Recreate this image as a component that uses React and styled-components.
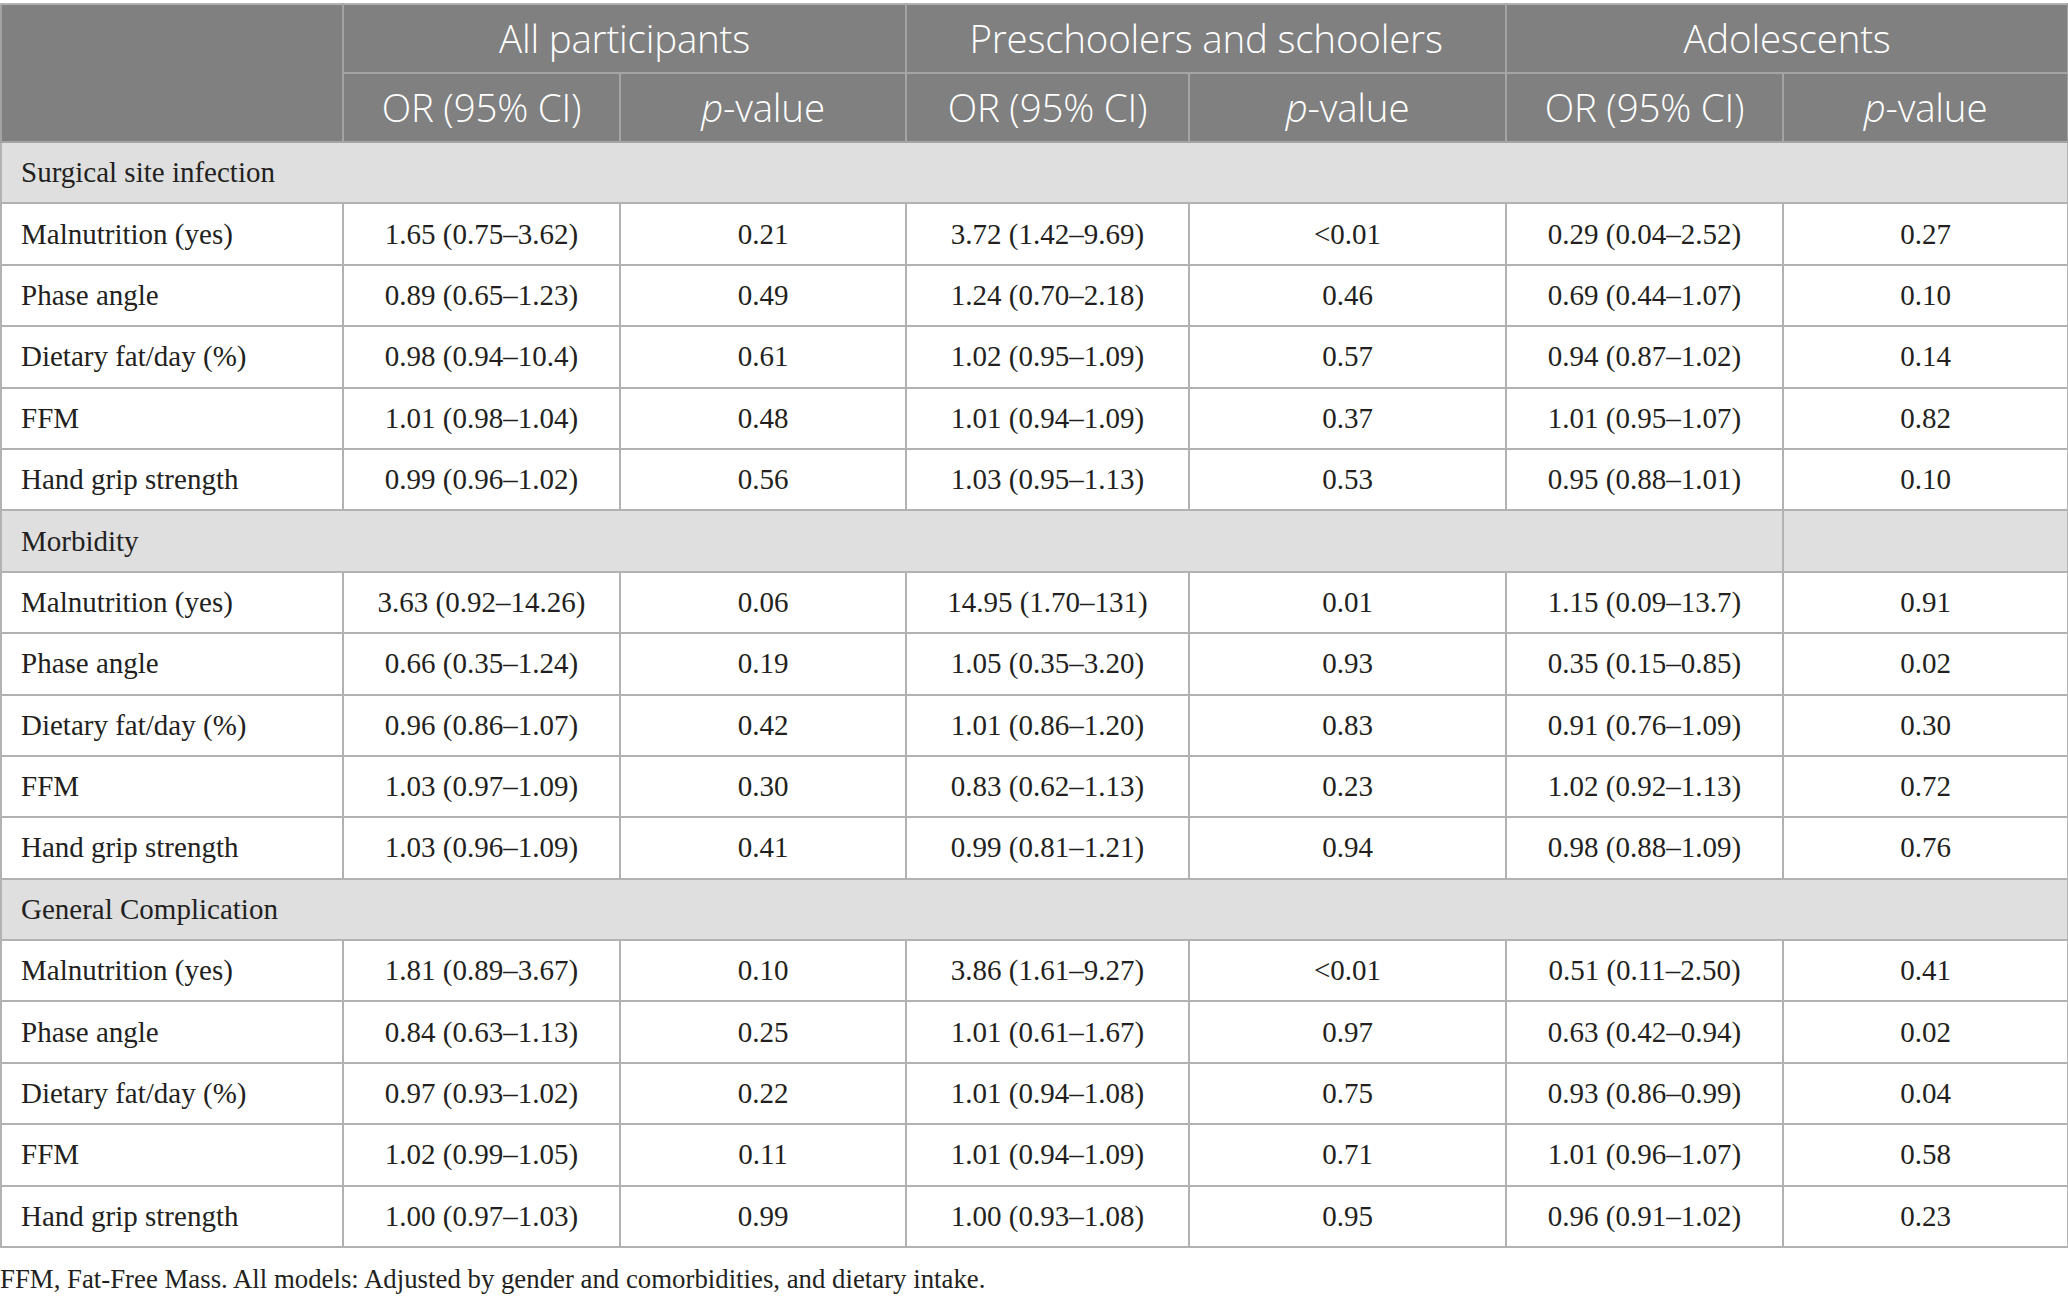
import React from 'react'
import styled, { createGlobalStyle } from 'styled-components'

const GlobalStyle = createGlobalStyle`
html, body {
    margin: 0;
    padding: 0;
    background: #ffffff;
}
`

const widths = [342, 277, 286, 283, 317, 277, 285]

const groups = ['All participants', 'Preschoolers and schoolers', 'Adolescents']

const sections = [
    {
        title: 'Surgical site infection',
        rows: [
            ['Malnutrition (yes)', '1.65 (0.75–3.62)', '0.21', '3.72 (1.42–9.69)', '<0.01', '0.29 (0.04–2.52)', '0.27'],
            ['Phase angle', '0.89 (0.65–1.23)', '0.49', '1.24 (0.70–2.18)', '0.46', '0.69 (0.44–1.07)', '0.10'],
            ['Dietary fat/day (%)', '0.98 (0.94–10.4)', '0.61', '1.02 (0.95–1.09)', '0.57', '0.94 (0.87–1.02)', '0.14'],
            ['FFM', '1.01 (0.98–1.04)', '0.48', '1.01 (0.94–1.09)', '0.37', '1.01 (0.95–1.07)', '0.82'],
            ['Hand grip strength', '0.99 (0.96–1.02)', '0.56', '1.03 (0.95–1.13)', '0.53', '0.95 (0.88–1.01)', '0.10'],
        ],
    },
    {
        title: 'Morbidity',
        split: true,
        rows: [
            ['Malnutrition (yes)', '3.63 (0.92–14.26)', '0.06', '14.95 (1.70–131)', '0.01', '1.15 (0.09–13.7)', '0.91'],
            ['Phase angle', '0.66 (0.35–1.24)', '0.19', '1.05 (0.35–3.20)', '0.93', '0.35 (0.15–0.85)', '0.02'],
            ['Dietary fat/day (%)', '0.96 (0.86–1.07)', '0.42', '1.01 (0.86–1.20)', '0.83', '0.91 (0.76–1.09)', '0.30'],
            ['FFM', '1.03 (0.97–1.09)', '0.30', '0.83 (0.62–1.13)', '0.23', '1.02 (0.92–1.13)', '0.72'],
            ['Hand grip strength', '1.03 (0.96–1.09)', '0.41', '0.99 (0.81–1.21)', '0.94', '0.98 (0.88–1.09)', '0.76'],
        ],
    },
    {
        title: 'General Complication',
        rows: [
            ['Malnutrition (yes)', '1.81 (0.89–3.67)', '0.10', '3.86 (1.61–9.27)', '<0.01', '0.51 (0.11–2.50)', '0.41'],
            ['Phase angle', '0.84 (0.63–1.13)', '0.25', '1.01 (0.61–1.67)', '0.97', '0.63 (0.42–0.94)', '0.02'],
            ['Dietary fat/day (%)', '0.97 (0.93–1.02)', '0.22', '1.01 (0.94–1.08)', '0.75', '0.93 (0.86–0.99)', '0.04'],
            ['FFM', '1.02 (0.99–1.05)', '0.11', '1.01 (0.94–1.09)', '0.71', '1.01 (0.96–1.07)', '0.58'],
            ['Hand grip strength', '1.00 (0.97–1.03)', '0.99', '1.00 (0.93–1.08)', '0.95', '0.96 (0.91–1.02)', '0.23'],
        ],
    },
]

function PValue() {
    return <><i>p</i>-value</>
}

export default function App() {
    return (
        <Page>
            <GlobalStyle />
            <Table>
                <colgroup>
                    {widths.map((w, i) => <col key={i} style={{ width: w }} />)}
                </colgroup>
                <thead>
                    <tr>
                        <HeadCell rowSpan={2} />
                        {groups.map(g => <HeadCell key={g} colSpan={2}>{g}</HeadCell>)}
                    </tr>
                    <tr>
                        {groups.map(g => (
                            <React.Fragment key={g}>
                                <HeadCell>OR (95% CI)</HeadCell>
                                <HeadCell><PValue /></HeadCell>
                            </React.Fragment>
                        ))}
                    </tr>
                </thead>
                <tbody>
                    {sections.map(s => (
                        <React.Fragment key={s.title}>
                            <tr>
                                <SectionCell colSpan={s.split ? 6 : 7}>{s.title}</SectionCell>
                                {s.split && <SectionCell />}
                            </tr>
                            {s.rows.map((r, i) => (
                                <tr key={i}>
                                    {r.map((c, j) => <Cell key={j} first={j === 0}>{c}</Cell>)}
                                </tr>
                            ))}
                        </React.Fragment>
                    ))}
                </tbody>
            </Table>
            <Footnote>FFM, Fat-Free Mass. All models: Adjusted by gender and comorbidities, and dietary intake.</Footnote>
        </Page>
    )
}

const Page = styled.div`
padding-top: 3px;
width: 2068px;
`

const Table = styled.table`
border-collapse: collapse;
table-layout: fixed;
width: 2068px;
border: 2px solid #b2b2b2;
font-family: "Liberation Serif", "Times New Roman", serif;
color: #231f20;
`

const HeadCell = styled.th`
background: #7f807f;
color: #ffffff;
font-family: "Open Sans", "Noto Sans", sans-serif;
font-weight: 300;
font-size: 38.5px;
letter-spacing: -0.2px;
height: 67px;
padding: 0;
text-align: center;
vertical-align: middle;
border: 2px solid #a3a4a3;
border-top-color: #b2b2b2;
line-height: 1.1;

i {
    font-style: italic;
}
`

const SectionCell = styled.td`
background: #e0dfe0;
font-size: 29px;
height: 59.4px;
padding: 0 0 0 19px;
text-align: left;
vertical-align: middle;
border: 2px solid #b2b2b2;
`

const Cell = styled.td`
background: #ffffff;
font-size: 29px;
height: 59.4px;
padding: ${props => props.first ? '0 0 0 19px' : '0'};
text-align: ${props => props.first ? 'left' : 'center'};
vertical-align: middle;
border: 2px solid #b2b2b2;
white-space: nowrap;
`

const Footnote = styled.p`
margin: 16px 0 0 0;
font-family: "Liberation Serif", "Times New Roman", serif;
font-size: 26.8px;
color: #231f20;
`
